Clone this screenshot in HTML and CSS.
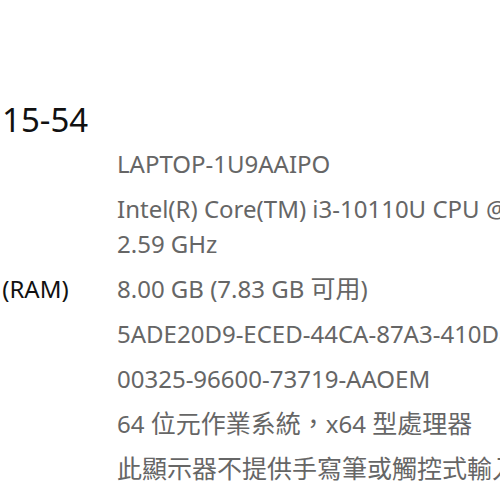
FILE: index.html
```html
<!DOCTYPE html>
<html>
<head>
    <title>關於</title>
    <link rel="stylesheet" href="styles.css">
</head>
<body>
    <div class="page">
        <h1 class="device-title">15-54</h1>

        <div class="specs">
            <div class="spec-label">裝置名稱</div>
            <div class="spec-value">LAPTOP-1U9AAIPO</div>

            <div class="spec-label">處理器</div>
            <div class="spec-value">Intel(R) Core(TM) i3-10110U CPU @ 2.10GHz &nbsp; 2.59 GHz</div>

            <div class="spec-label">已安裝記憶體 (RAM)</div>
            <div class="spec-value">8.00 GB (7.83 GB <span class="cjk">可用</span>)</div>

            <div class="spec-label">裝置識別碼</div>
            <div class="spec-value nowrap">5ADE20D9-ECED-44CA-87A3-410D8C2E5F19</div>

            <div class="spec-label">產品識別碼</div>
            <div class="spec-value">00325-96600-73719-AAOEM</div>

            <div class="spec-label">系統類型</div>
            <div class="spec-value">64 <span class="cjk">位元作業系統，</span>x64 <span class="cjk">型處理器</span></div>

            <div class="spec-label">手寫筆與觸控</div>
            <div class="spec-value nowrap"><span class="cjk">此顯示器不提供手寫筆或觸控式輸入。</span></div>
        </div>
    </div>
</body>
</html>
```

FILE: styles.css
```css
body {
    margin: 0;
    background: #fff;
    font-family: "Noto Sans", "Noto Sans CJK TC", sans-serif;
    overflow: hidden;
}

.page {
    padding-top: 96px;
}

.device-title {
    margin: 0 0 2px 2px;
    font-size: 33px;
    font-weight: normal;
    line-height: 48px;
    color: #111;
}

/* the window is cropped: the label column starts left of the view */
.specs {
    display: grid;
    grid-template-columns: 265px 520px;
    row-gap: 10px;
    margin-left: -148px;
    font-size: 24px;
    line-height: 35px;
}

.spec-label {
    color: #111;
    white-space: nowrap;
}

.spec-value {
    color: #666;
}

.cjk {
    font-size: 25px;
}

.nowrap {
    white-space: nowrap;
}
```
